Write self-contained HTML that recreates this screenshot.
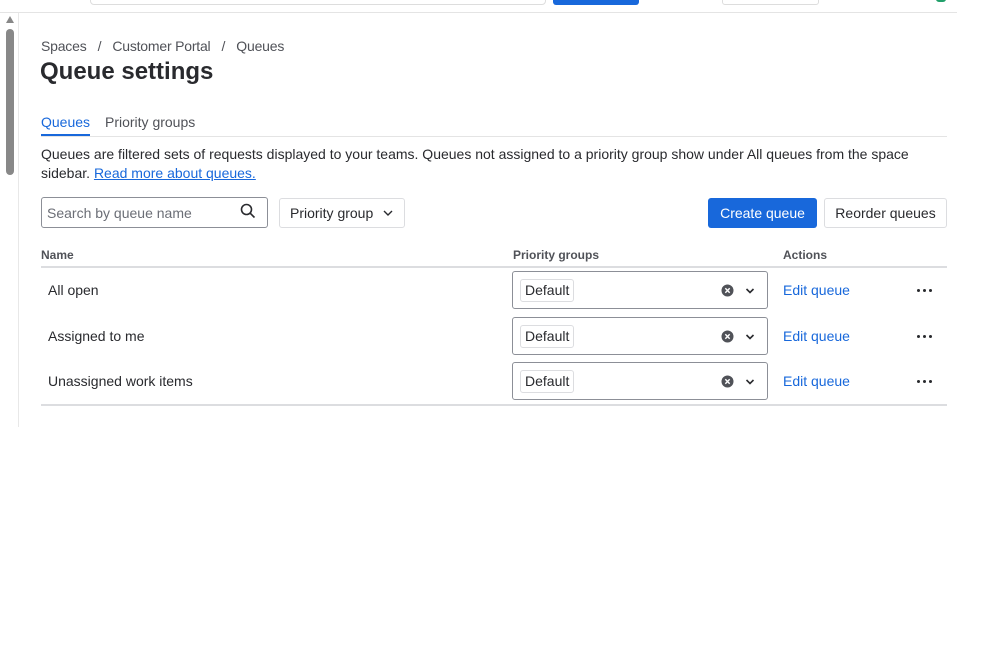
<!DOCTYPE html>
<html><head><style>
*{box-sizing:border-box;margin:0;padding:0}
body{width:999px;height:664px;background:#fff;font-family:"Liberation Sans",sans-serif;color:#292a2e;position:relative;overflow:hidden}
.a{position:absolute}
.d{position:absolute;width:3px;height:3px;border-radius:2px;background:#292a2e}
</style></head><body>
<div class="a" style="left:90px;top:-4px;width:456px;height:9px;border:1px solid #ddd;border-radius:4px"></div>
<div class="a" style="left:553px;top:-4px;width:86px;height:9px;background:#1868db;border-radius:3px"></div>
<div class="a" style="left:722px;top:-4px;width:97px;height:9px;border:1px solid #ddd;border-radius:3px"></div>
<div class="a" style="left:936px;top:-4px;width:10px;height:6px;background:#22a06b;border-radius:5px"></div>
<div class="a" style="left:0;top:12px;width:957px;height:1px;background:#e4e4e4"></div>
<div class="a" style="left:18px;top:13px;width:1px;height:414px;background:#e8e8e8"></div>
<div class="a" style="left:6px;top:16px;width:0;height:0;border-left:4px solid transparent;border-right:4px solid transparent;border-bottom:7px solid #888"></div>
<div class="a" style="left:6px;top:29px;width:8px;height:146px;background:#888;border-radius:4px"></div>

<div class="a" style="left:41px;top:38px;font-size:14px;color:#505258;letter-spacing:-0.2px">Spaces&nbsp;&nbsp; /&nbsp;&nbsp; Customer Portal&nbsp;&nbsp; /&nbsp;&nbsp; Queues</div>
<div class="a" style="left:40px;top:58px;font-size:24px;font-weight:bold">Queue settings</div>

<div class="a" style="left:41px;top:114px;font-size:14px;color:#1868db">Queues</div>
<div class="a" style="left:41px;top:134px;width:49px;height:2px;background:#1868db"></div>
<div class="a" style="left:105px;top:114px;font-size:14px;color:#505258">Priority groups</div>
<div class="a" style="left:41px;top:136px;width:906px;height:1px;background:#e4e4e4"></div>

<div class="a" style="left:41px;top:145px;font-size:14px;line-height:19px;width:906px">Queues are filtered sets of requests displayed to your teams. Queues not assigned to a priority group show under All queues from the space sidebar. <span style="color:#1868db;text-decoration:underline">Read more about queues.</span></div>

<div class="a" style="left:41px;top:197px;width:227px;height:31px;border:1px solid #8c8f97;border-radius:3px"></div>
<div class="a" style="left:47px;top:205px;font-size:14px;color:#6b6e76">Search by queue name</div>
<svg class="a" style="left:240px;top:203px" width="16" height="16" viewBox="0 0 16 16"><circle cx="6.5" cy="6.5" r="5" fill="none" stroke="#292a2e" stroke-width="1.6"/><path d="M10.3 10.3L14.5 14.5" stroke="#292a2e" stroke-width="1.6"/></svg>
<div class="a" style="left:279px;top:198px;width:126px;height:30px;border:1px solid #dcdde0;border-radius:3px"></div>
<div class="a" style="left:290px;top:205px;font-size:14px">Priority group</div>
<svg class="a" style="left:383px;top:209px" width="10" height="8"><path d="M1 2l4 4 4-4" fill="none" stroke="#292a2e" stroke-width="1.4"/></svg>

<div class="a" style="left:708px;top:198px;width:109px;height:30px;background:#1868db;border-radius:3px;color:#fff;font-size:14px;text-align:center;line-height:30px">Create queue</div>
<div class="a" style="left:824px;top:198px;width:123px;height:30px;border:1px solid #dcdde0;border-radius:3px;font-size:14px;text-align:center;line-height:28px">Reorder queues</div>

<div class="a" style="left:41px;top:248px;font-size:12px;font-weight:bold;color:#505258">Name</div>
<div class="a" style="left:513px;top:248px;font-size:12px;font-weight:bold;color:#505258">Priority groups</div>
<div class="a" style="left:783px;top:248px;font-size:12px;font-weight:bold;color:#505258">Actions</div>
<div class="a" style="left:41px;top:266px;width:906px;height:2px;background:#dcdde0"></div>
<div class="a" style="left:41px;top:404px;width:906px;height:2px;background:#dcdde0"></div>

<div id="rows"></div>
<script>
var names=["All open","Assigned to me","Unassigned work items"],h="";
names.forEach(function(n,i){var t=Math.round(271+i*45.5);
h+='<div class="a" style="left:48px;top:'+(t+11)+'px;font-size:14px">'+n+'</div>'+
'<div class="a" style="left:512px;top:'+t+'px;width:256px;height:38px;border:1px solid #8c8f97;border-radius:3px"></div>'+
'<div class="a" style="left:520px;top:'+(t+8)+'px;height:23px;padding:0 4px;border:1px solid #dcdde0;border-radius:3px;font-size:14px;line-height:21px">Default</div>'+
'<svg class="a" style="left:721px;top:'+(t+13)+'px" width="13" height="13"><circle cx="6.5" cy="6.5" r="6" fill="#505258"/><path d="M4.3 4.3l4.4 4.4M8.7 4.3l-4.4 4.4" stroke="#fff" stroke-width="1.4"/></svg>'+
'<svg class="a" style="left:745px;top:'+(t+16)+'px" width="10" height="8"><path d="M1.5 2l3.5 3.5L8.5 2" fill="none" stroke="#292a2e" stroke-width="1.6"/></svg>'+
'<div class="a" style="left:783px;top:'+(t+11)+'px;font-size:14px;color:#1868db">Edit queue</div>'+
'<div class="d" style="left:917px;top:'+(t+18)+'px"></div><div class="d" style="left:923px;top:'+(t+18)+'px"></div><div class="d" style="left:929px;top:'+(t+18)+'px"></div>';});
document.getElementById("rows").innerHTML=h;
</script>
</body></html>
